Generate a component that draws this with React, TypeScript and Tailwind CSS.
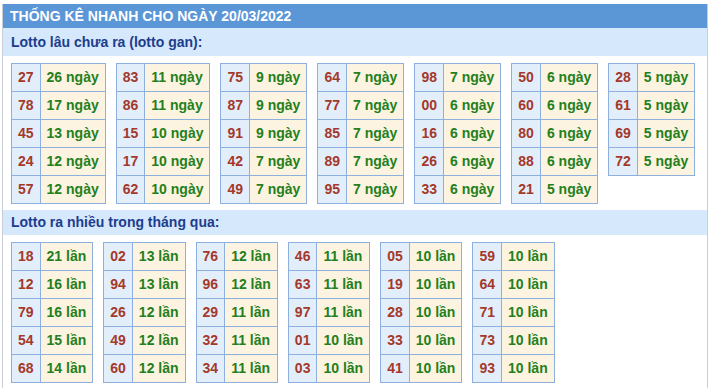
const GAN: [string, number][][] = [
  [["27", 26], ["78", 17], ["45", 13], ["24", 12], ["57", 12]],
  [["83", 11], ["86", 11], ["15", 10], ["17", 10], ["62", 10]],
  [["75", 9], ["87", 9], ["91", 9], ["42", 7], ["49", 7]],
  [["64", 7], ["77", 7], ["85", 7], ["89", 7], ["95", 7]],
  [["98", 7], ["00", 6], ["16", 6], ["26", 6], ["33", 6]],
  [["50", 6], ["60", 6], ["80", 6], ["88", 6], ["21", 5]],
  [["28", 5], ["61", 5], ["69", 5], ["72", 5]],
];

const NHIEU: [string, number][][] = [
  [["18", 21], ["12", 16], ["79", 16], ["54", 15], ["68", 14]],
  [["02", 13], ["94", 13], ["26", 12], ["49", 12], ["60", 12]],
  [["76", 12], ["96", 12], ["29", 11], ["32", 11], ["34", 11]],
  [["46", 11], ["63", 11], ["97", 11], ["01", 10], ["03", 10]],
  [["05", 10], ["19", 10], ["28", 10], ["33", 10], ["41", 10]],
  [["59", 10], ["64", 10], ["71", 10], ["73", 10], ["93", 10]],
];

function MiniTable({ rows, unit }: { rows: [string, number][]; unit: string }) {
  return (
    <div className="grid grid-cols-[auto_auto] border-l border-t border-[#8db0df]">
      {rows.map(([num, count], i) => (
        <div key={i} className="contents">
          <div className="h-[28px] px-[6px] flex items-center justify-center bg-[#e3eefb] text-[#a3392b] border-r border-b border-[#8db0df]">
            {num}
          </div>
          <div className="h-[28px] px-[6px] flex items-center bg-[#fdf3e1] text-[#23801c] border-r border-b border-[#8db0df]">
            {count} {unit}
          </div>
        </div>
      ))}
    </div>
  );
}

export default function App() {
  return (
    <div className="bg-white w-[711px] h-[388px] overflow-hidden pt-[4px] font-['Liberation_Sans',Arial,sans-serif]">
      <div className="ml-[2px] w-[706px] border-x border-[#c9cdd6] pb-4">
        <div className="h-[24px] bg-[#5b96d7] text-white font-bold text-[14px] flex items-center px-[7px]">
          THỐNG KÊ NHANH CHO NGÀY 20/03/2022
        </div>
        <div className="h-[28px] bg-[#d6e8fb] text-[#1c3d8e] font-bold text-[14px] flex items-center px-[8px]">
          Lotto lâu chưa ra (lotto gan):
        </div>
        <div className="flex items-start gap-[10px] px-[8px] pt-[7px] pb-[6px] text-[14px] font-bold">
          {GAN.map((t, i) => (
            <MiniTable key={i} rows={t} unit="ngày" />
          ))}
        </div>
        <div className="h-[25px] bg-[#d6e8fb] text-[#1c3d8e] font-bold text-[14px] flex items-center px-[8px]">
          Lotto ra nhiều trong tháng qua:
        </div>
        <div className="flex items-start gap-[10px] px-[8px] pt-[7px] text-[14px] font-bold">
          {NHIEU.map((t, i) => (
            <MiniTable key={i} rows={t} unit="lần" />
          ))}
        </div>
      </div>
    </div>
  );
}
